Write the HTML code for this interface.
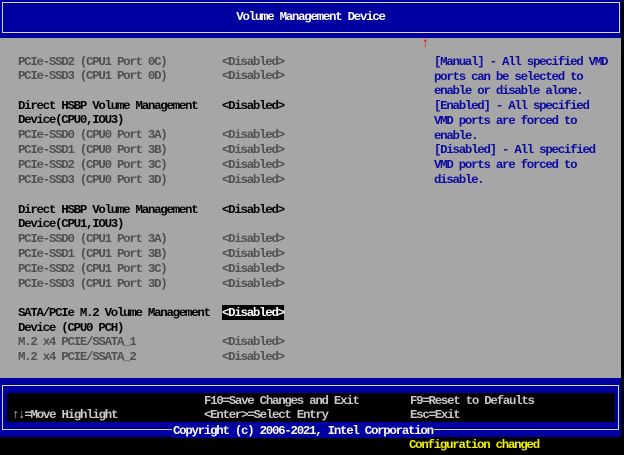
<!DOCTYPE html>
<html><head><meta charset="utf-8"><style>
*{margin:0;padding:0;box-sizing:border-box}
body{width:624px;height:455px;background:#000;position:relative;overflow:hidden;font-family:"Liberation Mono","DejaVu Sans Mono",monospace;font-size:12.4px;letter-spacing:-1.25px}
.a{position:absolute;white-space:pre;line-height:14px}
.d{color:#505050;font-weight:bold}.b{color:#000;font-weight:bold}
.h{color:#0a0aa0;font-weight:bold}
.f{color:#c8c8c8;font-weight:bold}
</style></head><body>
<div style="position:absolute;left:0;top:0;width:621px;height:38px;background:#0000a0"></div>
<div style="position:absolute;left:2px;top:2px;width:618px;height:31px;border:1px solid #d8d8d8"></div>
<div class="a" style="left:0;width:621px;top:10px;text-align:center;color:#fff;font-weight:bold">Volume Management Device</div>
<div style="position:absolute;left:0;top:38px;width:621px;height:340px;background:#a6a6a6"></div>

<div class="a d" style="left:18px;top:55px">PCIe-SSD2 (CPU1 Port 0C)</div><div class="a d" style="left:222px;top:55px">&lt;Disabled&gt;</div>
<div class="a d" style="left:18px;top:69px">PCIe-SSD3 (CPU1 Port 0D)</div><div class="a d" style="left:222px;top:69px">&lt;Disabled&gt;</div>
<div class="a b" style="left:18px;top:99px">Direct HSBP Volume Management</div><div class="a b" style="left:222px;top:99px">&lt;Disabled&gt;</div>
<div class="a b" style="left:18px;top:113px">Device(CPU0,IOU3)</div>
<div class="a d" style="left:18px;top:128px">PCIe-SSD0 (CPU0 Port 3A)</div><div class="a d" style="left:222px;top:128px">&lt;Disabled&gt;</div>
<div class="a d" style="left:18px;top:143px">PCIe-SSD1 (CPU0 Port 3B)</div><div class="a d" style="left:222px;top:143px">&lt;Disabled&gt;</div>
<div class="a d" style="left:18px;top:158px">PCIe-SSD2 (CPU0 Port 3C)</div><div class="a d" style="left:222px;top:158px">&lt;Disabled&gt;</div>
<div class="a d" style="left:18px;top:173px">PCIe-SSD3 (CPU0 Port 3D)</div><div class="a d" style="left:222px;top:173px">&lt;Disabled&gt;</div>
<div class="a b" style="left:18px;top:203px">Direct HSBP Volume Management</div><div class="a b" style="left:222px;top:203px">&lt;Disabled&gt;</div>
<div class="a b" style="left:18px;top:217px">Device(CPU1,IOU3)</div>
<div class="a d" style="left:18px;top:232px">PCIe-SSD0 (CPU1 Port 3A)</div><div class="a d" style="left:222px;top:232px">&lt;Disabled&gt;</div>
<div class="a d" style="left:18px;top:247px">PCIe-SSD1 (CPU1 Port 3B)</div><div class="a d" style="left:222px;top:247px">&lt;Disabled&gt;</div>
<div class="a d" style="left:18px;top:262px">PCIe-SSD2 (CPU1 Port 3C)</div><div class="a d" style="left:222px;top:262px">&lt;Disabled&gt;</div>
<div class="a d" style="left:18px;top:277px">PCIe-SSD3 (CPU1 Port 3D)</div><div class="a d" style="left:222px;top:277px">&lt;Disabled&gt;</div>
<div class="a b" style="left:18px;top:306px">SATA/PCIe M.2 Volume Management</div><div class="a" style="left:222px;top:305px;padding-top:1px;background:#000;color:#fff;font-weight:bold">&lt;Disabled&gt;</div>
<div class="a b" style="left:18px;top:321px">Device (CPU0 PCH)</div>
<div class="a d" style="left:18px;top:335px">M.2 x4 PCIE/SSATA_1</div><div class="a d" style="left:222px;top:335px">&lt;Disabled&gt;</div>
<div class="a d" style="left:18px;top:350px">M.2 x4 PCIE/SSATA_2</div><div class="a d" style="left:222px;top:350px">&lt;Disabled&gt;</div>

<div class="a" style="left:421px;top:37px;color:#e00000;font-weight:bold;font-size:14px">↑</div>
<div class="a h" style="left:434px;top:55px;line-height:14.7px">[Manual] - All specified VMD
ports can be selected to
enable or disable alone.
[Enabled] - All specified
VMD ports are forced to
enable.
[Disabled] - All specified
VMD ports are forced to
disable.</div>

<div style="position:absolute;left:0;top:378px;width:621px;height:59px;background:#0000a0"></div>
<div style="position:absolute;left:2px;top:385px;width:617px;height:45px;border:1px solid #d8d8d8"></div>
<div style="position:absolute;left:7px;top:393px;width:608px;height:29px;background:#000"></div>
<div class="a f" style="left:204px;top:394px">F10=Save Changes and Exit</div>
<div class="a f" style="left:410px;top:394px">F9=Reset to Defaults</div>
<div class="a f" style="left:12px;top:408px">↑↓=Move Highlight</div>
<div class="a f" style="left:204px;top:408px">&lt;Enter&gt;=Select Entry</div>
<div class="a f" style="left:410px;top:408px">Esc=Exit</div>
<div class="a" style="left:172px;top:424px;background:#0000a0;color:#fff;font-weight:bold;padding:0 1px">Copyright (c) 2006-2021, Intel Corporation</div>
<div class="a" style="left:409px;top:438px;color:#f0f000;font-weight:bold">Configuration changed</div>
</body></html>
